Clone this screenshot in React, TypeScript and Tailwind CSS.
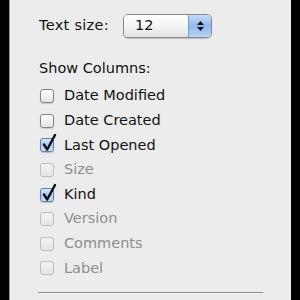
import React from "react";

type Item = { label: string; checked?: boolean; disabled?: boolean };

const items: Item[] = [
  { label: "Date Modified" },
  { label: "Date Created" },
  { label: "Last Opened", checked: true },
  { label: "Size", disabled: true },
  { label: "Kind", checked: true },
  { label: "Version", disabled: true },
  { label: "Comments", disabled: true },
  { label: "Label", disabled: true },
];

function Box({ checked, disabled }: { checked?: boolean; disabled?: boolean }) {
  if (checked) {
    return (
      <div className="relative w-[14px] h-[14px] shrink-0 rounded-[3px] border border-[#5a7fb0] bg-gradient-to-b from-[#dbe8f8] via-[#a9c8ee] to-[#cfe2fa] shadow-[0_1px_1px_rgba(0,0,0,0.2)]">
        <svg className="absolute left-[-1px] top-[-6px]" width="18" height="20" viewBox="0 0 18 20">
          <path d="M4 11.5 L7.2 16.5 L15 2" fill="none" stroke="#111" strokeWidth="2.4" strokeLinecap="round" strokeLinejoin="round" />
        </svg>
      </div>
    );
  }
  return (
    <div
      className={
        disabled
          ? "w-[14px] h-[14px] shrink-0 rounded-[3px] border border-[#bdbdbd] bg-gradient-to-b from-[#f4f4f4] to-[#e4e4e4]"
          : "w-[14px] h-[14px] shrink-0 rounded-[3px] border border-[#858585] bg-gradient-to-b from-[#ffffff] to-[#e4e4e4] shadow-[0_1px_1px_rgba(0,0,0,0.15)]"
      }
    />
  );
}

export default function App() {
  return (
    <div className="w-[300px] h-[300px] bg-black flex overflow-hidden" style={{ fontFamily: '"DejaVu Sans", sans-serif' }}>
      <div className="ml-[9px] w-[282px] h-[300px] bg-[#ececec] border-l border-[#9a9a9a] flex flex-col pl-[29px] pt-[14px] text-[14.5px] text-[#111]">
        <div className="flex items-center h-[24px]">
          <span className="w-[84px] tracking-[0.3px]">Text size:</span>
          <div className="flex h-[24px] w-[89px] rounded-[5px] border border-[#8a8a8a] overflow-hidden shadow-[0_1px_1px_rgba(0,0,0,0.2)]">
            <div className="flex-1 flex items-center pl-[11px] bg-gradient-to-b from-[#ffffff] via-[#f4f4f4] to-[#e2e2e2]">12</div>
            <div className="w-[23px] flex flex-col items-center justify-center gap-[2px] bg-gradient-to-b from-[#c9dcf6] via-[#8fb8ee] to-[#b9d4f7] border-l border-[#7a9cc8]">
              <svg width="7" height="4" viewBox="0 0 7 4"><path d="M3.5 0 L7 4 L0 4 Z" fill="#111" /></svg>
              <svg width="7" height="4" viewBox="0 0 7 4"><path d="M0 0 L7 0 L3.5 4 Z" fill="#111" /></svg>
            </div>
          </div>
        </div>
        <div className="mt-[22px] h-[16px] leading-[16px]">Show Columns:</div>
        <div className="mt-[8px] flex flex-col">
          {items.map((it) => (
            <div key={it.label} className="h-[24.6px] flex items-center gap-[10px] pl-[1px]">
              <Box checked={it.checked} disabled={it.disabled} />
              <span className={it.disabled ? "text-[#8e8e8e]" : "text-[#111]"}>{it.label}</span>
            </div>
          ))}
        </div>
        <div className="mt-[11px] ml-[-1px] w-[225px] h-[2px] bg-[#8a8a8a] border-b border-[#f8f8f8]" />
      </div>
    </div>
  );
}
